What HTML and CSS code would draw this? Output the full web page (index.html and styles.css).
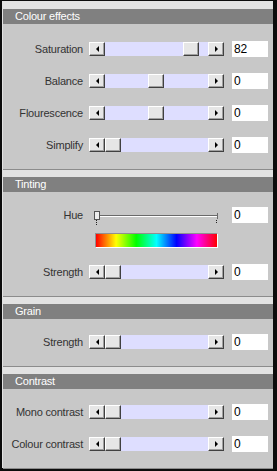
FILE: index.html
```html
<!DOCTYPE html>
<html lang="en">
<head>
    <meta charset="UTF-8">
    <title>Effects</title>
    <link rel="stylesheet" href="styles.css">
</head>
<body>
    <div class="panel">
        <section class="group">
            <h2 class="group-title">Colour effects</h2>
            <div class="group-body first">
                <div class="row">
                    <span class="row-label">Saturation</span>
                    <div class="scroll">
                        <span class="btn btn-left"></span>
                        <span class="track"><span class="thumb" style="left: 78px"></span></span>
                        <span class="btn btn-right"></span>
                    </div>
                    <span class="value">82</span>
                </div>
                <div class="row">
                    <span class="row-label">Balance</span>
                    <div class="scroll">
                        <span class="btn btn-left"></span>
                        <span class="track"><span class="thumb" style="left: 43px"></span></span>
                        <span class="btn btn-right"></span>
                    </div>
                    <span class="value">0</span>
                </div>
                <div class="row">
                    <span class="row-label">Flourescence</span>
                    <div class="scroll">
                        <span class="btn btn-left"></span>
                        <span class="track"><span class="thumb" style="left: 43px"></span></span>
                        <span class="btn btn-right"></span>
                    </div>
                    <span class="value">0</span>
                </div>
                <div class="row">
                    <span class="row-label">Simplify</span>
                    <div class="scroll">
                        <span class="btn btn-left"></span>
                        <span class="track"><span class="thumb" style="left: 0px"></span></span>
                        <span class="btn btn-right"></span>
                    </div>
                    <span class="value">0</span>
                </div>
            </div>
        </section>

        <section class="group">
            <h2 class="group-title">Tinting</h2>
            <div class="group-body">
                <div class="row">
                    <span class="row-label">Hue</span>
                    <div class="hue-slider">
                        <svg width="135" height="20" viewBox="0 0 135 20">
                            <line x1="7" y1="10.5" x2="129" y2="10.5" stroke="#6a6a6a" stroke-width="1"/>
                            <line x1="7" y1="11.5" x2="129" y2="11.5" stroke="#ffffff" stroke-width="1"/>
                            <line x1="128.5" y1="8" x2="128.5" y2="14" stroke="#6a6a6a" stroke-width="1"/>
                            <line x1="127.5" y1="15" x2="127.5" y2="19" stroke="#222" stroke-width="1" stroke-dasharray="1 1"/>
                            <rect x="5.5" y="6.5" width="5" height="8" fill="#eeeeee" stroke="#555" stroke-width="1"/>
                            <line x1="7.5" y1="15" x2="7.5" y2="20" stroke="#222" stroke-width="1" stroke-dasharray="1 1"/>
                        </svg>
                    </div>
                    <span class="value">0</span>
                </div>
                <div class="hue-bar"></div>
                <div class="row">
                    <span class="row-label">Strength</span>
                    <div class="scroll">
                        <span class="btn btn-left"></span>
                        <span class="track"><span class="thumb" style="left: 0px"></span></span>
                        <span class="btn btn-right"></span>
                    </div>
                    <span class="value">0</span>
                </div>
            </div>
        </section>

        <section class="group">
            <h2 class="group-title">Grain</h2>
            <div class="group-body">
                <div class="row">
                    <span class="row-label">Strength</span>
                    <div class="scroll">
                        <span class="btn btn-left"></span>
                        <span class="track"><span class="thumb" style="left: 0px"></span></span>
                        <span class="btn btn-right"></span>
                    </div>
                    <span class="value">0</span>
                </div>
            </div>
        </section>

        <section class="group last">
            <h2 class="group-title">Contrast</h2>
            <div class="group-body">
                <div class="row">
                    <span class="row-label">Mono contrast</span>
                    <div class="scroll">
                        <span class="btn btn-left"></span>
                        <span class="track"><span class="thumb" style="left: 0px"></span></span>
                        <span class="btn btn-right"></span>
                    </div>
                    <span class="value">0</span>
                </div>
                <div class="row">
                    <span class="row-label">Colour contrast</span>
                    <div class="scroll">
                        <span class="btn btn-left"></span>
                        <span class="track"><span class="thumb" style="left: 0px"></span></span>
                        <span class="btn btn-right"></span>
                    </div>
                    <span class="value">0</span>
                </div>
            </div>
        </section>
    </div>
</body>
</html>
```

FILE: styles.css
```css
* {
    margin: 0;
    padding: 0;
    box-sizing: border-box;
}

body {
    width: 277px;
    height: 471px;
    background: #0c0c0c;
    padding: 1px 4px 3px 2px;
    font-family: "Liberation Sans", Arial, sans-serif;
    font-size: 11px;
    letter-spacing: -0.2px;
    color: #333;
    overflow: hidden;
}

.panel {
    height: 467px;
    background: #e2e2e2;
    padding: 8px 0 0 1px;
}

.group {
    background: #c8c8c8;
    border-bottom: 1px solid #8c8c8c;
    margin-bottom: 7px;
}

.group.last {
    margin-bottom: 0;
}

.group-title {
    height: 15px;
    line-height: 15px;
    background: #808080;
    color: #fff;
    font-size: 11px;
    font-weight: normal;
    padding-left: 12px;
}

.group-body {
    padding: 7px 0 8px;
}

.group-body.first {
    padding-top: 9px;
}

.row {
    display: flex;
    align-items: center;
    height: 32px;
}

.row-label {
    width: 80px;
    text-align: right;
    margin-right: 6px;
    white-space: nowrap;
}

.scroll {
    display: flex;
    width: 135px;
    height: 14px;
    margin-right: 8px;
}

.btn,
.thumb {
    display: block;
    width: 16px;
    height: 14px;
    background: #e6e6e6;
    border-top: 1px solid #fff;
    border-left: 1px solid #fff;
    border-right: 1px solid #404040;
    border-bottom: 1px solid #404040;
    box-shadow: inset -1px -1px 0 #a0a0a0;
}

.btn {
    position: relative;
    flex: none;
}

.btn::before {
    content: "";
    position: absolute;
    top: 3px;
    left: 6px;
    border-top: 3px solid transparent;
    border-bottom: 3px solid transparent;
}

.btn-left::before {
    border-right: 3px solid #000;
}

.btn-right::before {
    border-left: 3px solid #000;
}

.track {
    position: relative;
    flex: 1;
    background: #dedeff;
}

.thumb {
    position: absolute;
    top: 0;
}

.value {
    width: 36px;
    height: 16px;
    line-height: 16px;
    background: #fff;
    color: #000;
    padding-left: 2px;
    font-size: 12px;
}

.hue-slider {
    width: 135px;
    height: 20px;
    margin-right: 8px;
}

.hue-slider svg {
    display: block;
}

.hue-bar {
    width: 123px;
    height: 15px;
    margin: 2px 0 8px 92px;
    border-top: 1px solid #909090;
    border-left: 1px solid #909090;
    border-right: 1px solid #fff;
    border-bottom: 1px solid #fff;
    background: linear-gradient(to right, #f00 0%, #ff0 16.6%, #0f0 33.3%, #0ff 50%, #00f 66.6%, #f0f 83.3%, #f00 100%);
}
```
